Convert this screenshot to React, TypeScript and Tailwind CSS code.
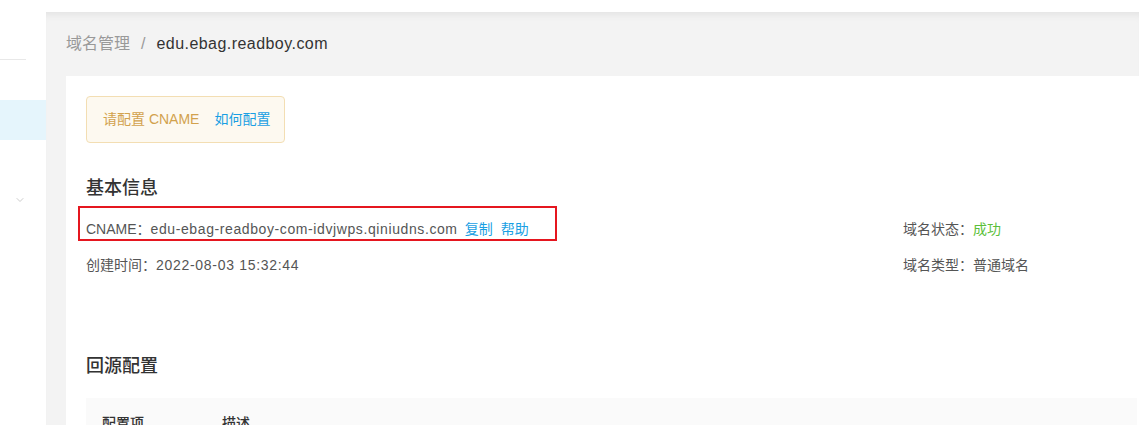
import React from 'react';
import { ChevronDown } from 'lucide-react';

const font = { fontFamily: '"Liberation Sans", "Noto Sans CJK SC", sans-serif' };

function Sidebar() {
    return (
        <aside className="w-[46px] shrink-0 bg-white flex flex-col">
            <div className="h-[60px] border-b border-[#e8e8e8] w-[26px] shrink-0" />
            <div className="h-[40px] mt-[40px] bg-[#e5f5fc] shrink-0" />
            <div className="flex pl-[14px] mt-[54px] text-[#bbbbbb]">
                <ChevronDown size={12} strokeWidth={1.5} />
            </div>
        </aside>
    );
}

export default function App() {
    return (
        <div className="w-[1139px] h-[425px] overflow-hidden bg-white flex" style={font}>
            <Sidebar />
            <div className="flex-1 flex flex-col min-w-0">
                <div className="h-[12px] bg-white shrink-0" />
                <main className="flex-1 min-h-0 bg-[#f3f3f3] pl-[20px] shadow-[inset_0_8px_8px_-6px_rgba(0,0,0,0.08)] flex flex-col">
                    <div className="h-[64px] shrink-0 flex items-center text-[16px] pb-[1px]">
                        <span className="text-[#999999]">域名管理</span>
                        <span className="text-[#999999] mx-[11px]">/</span>
                        <span className="text-[#333333] tracking-[0.45px]">edu.ebag.readboy.com</span>
                    </div>
                    <div className="flex-1 min-h-0 overflow-hidden bg-white pl-[20px] pt-[20px]">
                        <div className="w-[199px] h-[47px] rounded-[4px] border border-[#f3deb3] bg-[#fdf9f0] flex items-center pl-[16px] text-[14px]">
                            <span className="text-[#d2a24d]">请配置 CNAME</span>
                            <span className="text-[#1a9fe3] ml-[15px]">如何配置</span>
                        </div>

                        <h2 className="mt-[33px] text-[18px] leading-[24px] font-medium text-[#333333]">基本信息</h2>

                        <div className="mt-[19px] flex text-[14px] leading-[20px] text-[#555555]">
                            <div className="w-[817px] relative">
                                <div className="absolute left-[-8px] top-[-13px] w-[479px] h-[35px] border-2 border-[#e5161f]" />
                                <span>CNAME：</span>
                                <span className="tracking-[0.6px]">edu-ebag-readboy-com-idvjwps.qiniudns.com</span>
                                <span className="text-[#1a9fe3] ml-[7px]">复制</span>
                                <span className="text-[#1a9fe3] ml-[8px]">帮助</span>
                            </div>
                            <div>
                                <span>域名状态：</span>
                                <span className="text-[#5cbf3a]">成功</span>
                            </div>
                        </div>

                        <div className="mt-[16px] flex text-[14px] leading-[20px] text-[#555555]">
                            <div className="w-[817px]">
                                <span>创建时间：</span>
                                <span className="tracking-[0.7px]">2022-08-03 15:32:44</span>
                            </div>
                            <div>域名类型：普通域名</div>
                        </div>

                        <h2 className="mt-[79px] text-[18px] leading-[24px] font-medium text-[#333333]">回源配置</h2>

                        <div className="mt-[20px] mr-[2px] bg-[#fafafa] h-[48px] flex items-start text-[14px] leading-[20px] font-medium text-[#333333] pt-[15px]">
                            <span className="w-[136px] pl-[16px]">配置项</span>
                            <span>描述</span>
                        </div>
                    </div>
                </main>
            </div>
        </div>
    );
}
